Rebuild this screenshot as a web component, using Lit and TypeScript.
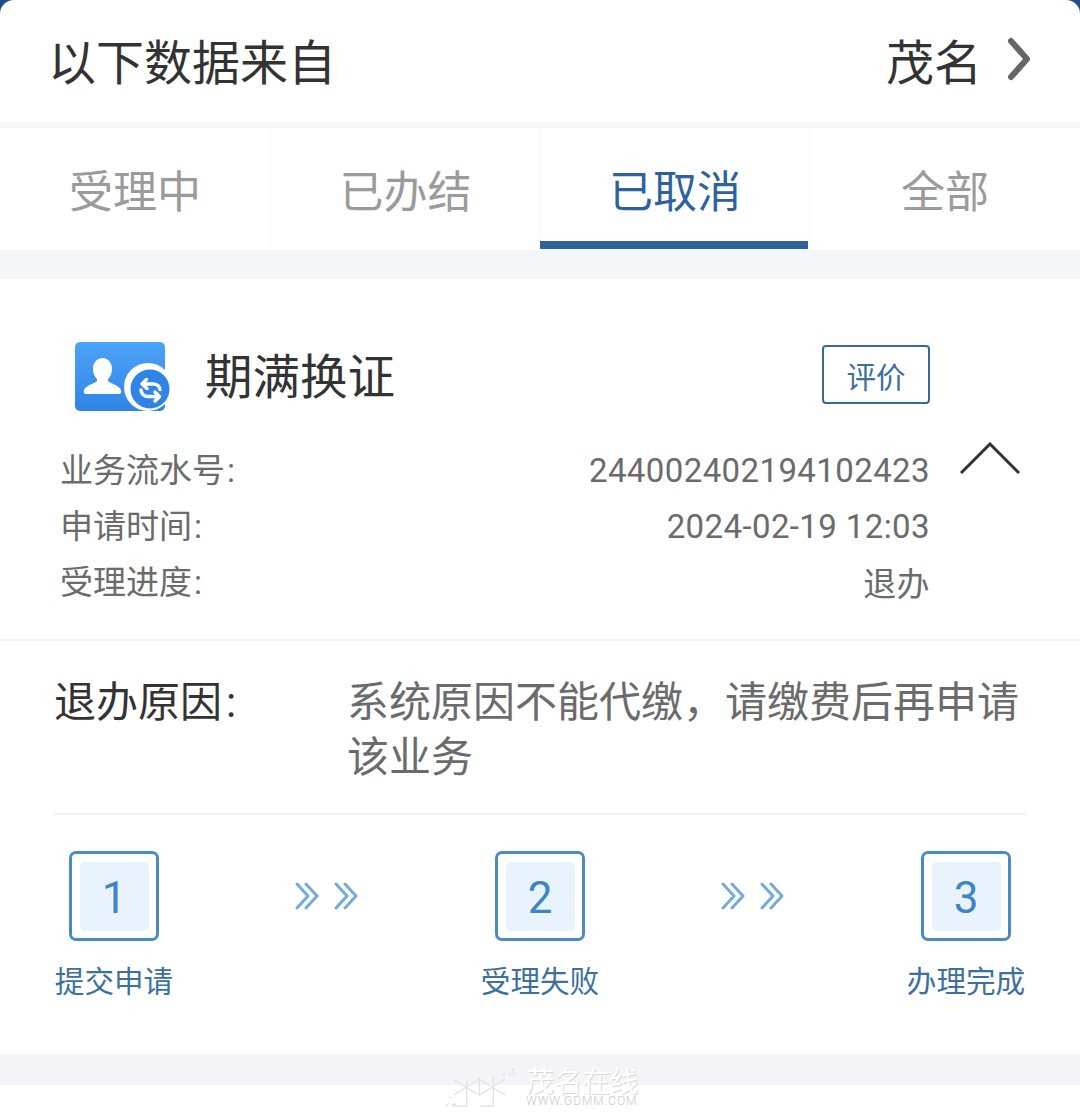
import { LitElement, html, css, svg } from "lit";
import { customElement } from "lit/decorators.js";

const TABS = ["受理中", "已办结", "已取消", "全部"];
const ACTIVE_TAB = 2;
const INFO_ROWS = [
  ["业务流水号", "244002402194102423"],
  ["申请时间", "2024-02-19 12:03"],
  ["受理进度", "退办"],
];
const STEPS = [
  ["1", "提交申请"],
  ["2", "受理失败"],
  ["3", "办理完成"],
];

const doubleArrow = svg`
  <path d="M2 2l11 12L2 26M11 2l11 12-11 12M41 2l11 12-11 12M50 2l11 12-11 12"/>
`;

@customElement("app-root")
export class AppRoot extends LitElement {
  static override styles = css`
    :host {
      display: block;
      width: 1080px;
      height: 1112px;
      overflow: hidden;
      position: relative;
      background: #1f4f86;
      font-family: "Roboto", "Noto Sans CJK SC", sans-serif;
    }

    .page {
      height: 100%;
      background: #fff;
      border-radius: 14px 14px 0 0;
      display: flex;
      flex-direction: column;
    }

    .header {
      height: 122px;
      flex: none;
      padding: 0 48px 4px 48px;
      display: flex;
      align-items: center;
      justify-content: space-between;
      font-size: 48px;
      color: #333;
      box-sizing: border-box;
    }

    .city {
      display: flex;
      align-items: center;
      gap: 24px;
    }

    .city svg {
      width: 26px;
      height: 44px;
      fill: none;
      stroke: #666;
      stroke-width: 6;
      stroke-linecap: round;
      stroke-linejoin: round;
    }

    .tabs {
      flex: none;
      height: 122px;
      border-top: 6px solid #f7f7f7;
      display: grid;
      grid-template-columns: 270px 270px 269px 271px;
    }

    .tab {
      position: relative;
      display: flex;
      align-items: center;
      justify-content: center;
      font-size: 44px;
      color: #9b9b9b;
      border-left: 1px solid #f7f7f7;
      box-sizing: border-box;
    }

    .tab:first-child {
      border-left: none;
    }

    .tab.active {
      color: #2d629f;
    }

    .tab.active::after {
      content: "";
      position: absolute;
      left: -1px;
      right: 1px;
      bottom: 1px;
      height: 8px;
      background: #2d629f;
    }

    .band {
      flex: none;
      height: 29px;
      background: #f4f7f9;
    }

    .summary {
      flex: none;
      height: 362px;
      box-sizing: border-box;
      border-bottom: 2px solid #f2f2f2;
      padding: 64px 150px 0 60px;
      position: relative;
    }

    .title-row {
      display: flex;
      align-items: center;
      height: 69px;
      padding-left: 15px;
    }

    .service-icon {
      width: 98px;
      height: 72px;
      margin-right: 32px;
      flex: none;
    }

    .title-row h2 {
      flex: 1;
      margin: 0;
      padding-bottom: 8px;
      font-size: 47.5px;
      font-weight: 400;
      color: #333;
    }

    .rate {
      width: 108px;
      height: 59px;
      margin-bottom: 6px;
      box-sizing: border-box;
      border: 2px solid #3a6a94;
      border-radius: 4px;
      display: flex;
      align-items: center;
      justify-content: center;
      font-size: 29.5px;
      color: #3d6f9e;
    }

    .info {
      margin-top: 30px;
    }

    .info-row {
      height: 56px;
      display: flex;
      align-items: center;
      justify-content: space-between;
      color: #6b6b6b;
    }

    .info-row .name {
      font-size: 33px;
      padding-bottom: 5px;
    }

    .colon {
      margin-left: 2px;
    }

    .info-row .value {
      font-size: 33px;
      letter-spacing: 0.4px;
    }

    .collapse {
      position: absolute;
      left: 960px;
      top: 163px;
      width: 60px;
      height: 32px;
      fill: none;
      stroke: #333;
      stroke-width: 3;
    }

    .reason {
      flex: none;
      height: 174px;
      box-sizing: border-box;
      margin: 0 54px;
      padding-top: 34px;
      border-bottom: 2px solid #f2f2f2;
      display: grid;
      grid-template-columns: 293px 1fr;
      font-size: 42px;
      line-height: 55px;
    }

    .reason .label {
      color: #333;
    }

    .reason .colon {
      margin-left: 4px;
    }

    .reason .text {
      color: #6b6b6b;
      margin-right: -8px;
    }

    .steps {
      flex: 1;
      margin: 0 54px;
      padding-top: 36px;
      display: flex;
      justify-content: space-between;
      align-items: flex-start;
    }

    .step {
      width: 120px;
      display: flex;
      flex-direction: column;
      align-items: center;
      font-size: 29.6px;
      color: #3d709e;
      white-space: nowrap;
    }

    .num {
      width: 90px;
      height: 90px;
      box-sizing: border-box;
      border: 3.5px solid #4a8ac4;
      border-radius: 7px;
      padding: 7.5px;
      margin-bottom: 17px;
    }

    .num span {
      height: 100%;
      box-sizing: border-box;
      padding-top: 4px;
      display: flex;
      align-items: center;
      justify-content: center;
      background: #e9f3fd;
      border-radius: 5px;
      font-size: 44px;
      color: #3e85c8;
    }

    .arrows {
      width: 64px;
      height: 28px;
      margin-top: 31px;
      fill: none;
      stroke: #74abdc;
      stroke-width: 3;
      stroke-linecap: round;
      stroke-linejoin: round;
    }

    .footer-band {
      flex: none;
      height: 31px;
      margin-bottom: 27px;
      background: #f4f4f8;
    }

    .watermark {
      position: absolute;
      left: 445px;
      top: 1068px;
      display: flex;
      gap: 11px;
    }

    .watermark svg {
      width: 70px;
      height: 40px;
      flex: none;
      fill: none;
      stroke: #e2e2e2;
      stroke-width: 1.3;
    }

    .wm-text {
      width: 114px;
      padding-top: 2px;
      white-space: nowrap;
    }

    .wm-name {
      display: block;
      font-size: 28px;
      line-height: 26px;
      color: #fff;
      text-shadow: 1px 1px 0 #d9d9d9;
    }

    .wm-url {
      display: block;
      font-size: 12px;
      font-weight: 300;
      line-height: 10px;
      letter-spacing: 0.9px;
      color: #c9c9c9;
    }
  `;

  override render() {
    return html`
      <div class="page">
        <header class="header">
          <span>以下数据来自</span>
          <span class="city">
            茂名
            <svg viewBox="0 0 26 44"><path d="M5 4l16 18L5 40" /></svg>
          </span>
        </header>
        <nav class="tabs">
          ${TABS.map(
            (t, i) => html`<div class="tab ${i === ACTIVE_TAB ? "active" : ""}">${t}</div>`
          )}
        </nav>
        <div class="band"></div>
        <section class="summary">
          <div class="title-row">
            <svg class="service-icon" viewBox="0 0 98 72">
              <defs>
                <linearGradient id="card" x1="0" y1="0" x2="0" y2="1">
                  <stop offset="0" stop-color="#4da3f7" />
                  <stop offset="1" stop-color="#2f84e6" />
                </linearGradient>
              </defs>
              <rect x="0" y="0" width="90" height="69" rx="5" fill="url(#card)" />
              <path
                d="M27.5 16c6 0 9.500 5 9.500 11 0 4-1.500 8-4 10v2c3 3 11 4 13 9 .7 2 0 4-2 4H11c-2 0-2.700-2-2-4 2-5 10-6 13-9v-2c-2.500-2-4-6-4-10 0-6 3.500-11 9.500-11z"
                fill="#fff"
              />
              <circle cx="73" cy="45" r="24" fill="#fff" />
              <circle cx="75" cy="47" r="19.500" fill="#2f84e6" />
              <path
                d="M71.500 37.500l-4.500 4.500 5 4.500M67.500 42h11c3.500 0 6 2.500 6.500 5.500M80 50l4.500 4.500-4.500 4.500M84 54.500H73c-3.500 0-6.500-2.500-7-6.500"
                fill="none"
                stroke="#fff"
                stroke-width="3.500"
                stroke-linecap="round"
                stroke-linejoin="round"
              />
            </svg>
            <h2>期满换证</h2>
            <div class="rate">评价</div>
          </div>
          <div class="info">
            ${INFO_ROWS.map(
              ([label, value]) => html`
                <div class="info-row">
                  <span class="name">${label}<span class="colon">:</span></span>
                  <span class="value">${value}</span>
                </div>
              `
            )}
          </div>
          <svg class="collapse" viewBox="0 0 60 32"><path d="M1 31L30 2l29 29" /></svg>
        </section>
        <section class="reason">
          <div class="label">退办原因<span class="colon">:</span></div>
          <div class="text">系统原因不能代缴，请缴费后再申请该业务</div>
        </section>
        <section class="steps">
          ${STEPS.map(
            ([n, label], i) => html`
              ${i > 0 ? html`<svg class="arrows" viewBox="0 0 64 28">${doubleArrow}</svg>` : null}
              <div class="step">
                <div class="num"><span>${n}</span></div>
                ${label}
              </div>
            `
          )}
        </section>
        <div class="footer-band"></div>
      </div>
      <div class="watermark">
        <svg viewBox="0 0 70 40">
          <path
            d="M8.300 11.300L34.300 27.300 60 11.300M8.300 27.300L34.300 11.300 60 27.300M21.700 11v27H8.300M34.300 11.300v16M48.300 8v30H35M56.700 7.300l3.300-2M63.300 7.300l6.700-2M66.700 3l2.300-2.300M1 38l3.300-2.700M6 37.300l5.300-1.300M4 30l2-.7"
          />
        </svg>
        <div class="wm-text">
          <span class="wm-name">茂名在线</span>
          <span class="wm-url">WWW.GDMM.COM</span>
        </div>
      </div>
    `;
  }
}
